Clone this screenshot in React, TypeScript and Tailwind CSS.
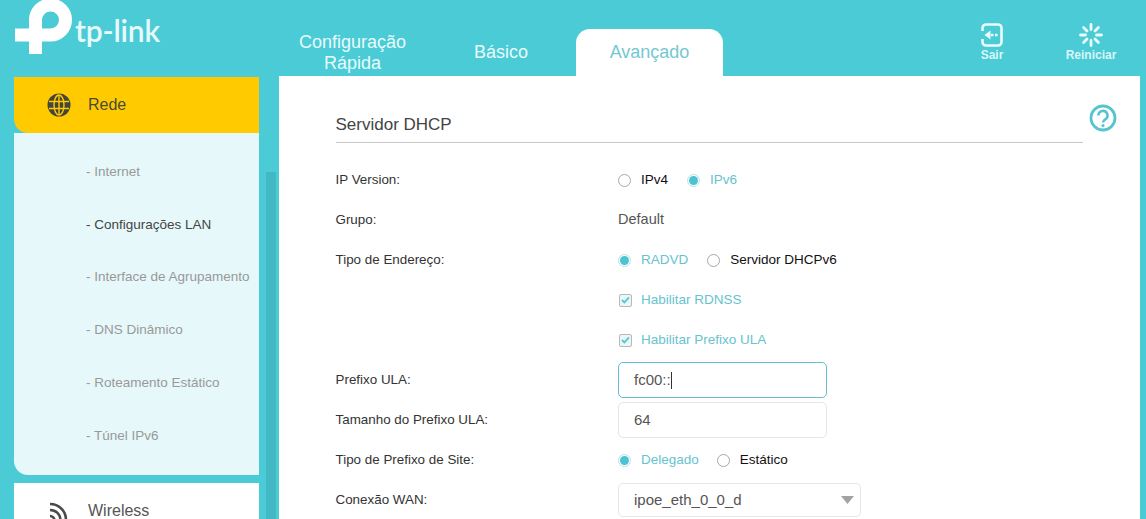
const Radio = ({ on, label, gap = "mr-[19px]" }: { on?: boolean; label: string; gap?: string }) => (
  <span className={`flex items-center ${gap}`}>
    <span className={`w-[13px] h-[13px] rounded-full border flex items-center justify-center ${on ? "border-[#b5e3e8]" : "border-[#a8a8a8]"}`}>
      {on && <span className="w-[9px] h-[9px] rounded-full bg-[#4cc3d0]" />}
    </span>
    <span className={`ml-[10px] text-[13.5px] ${on ? "text-[#67c3cf]" : "text-[#111]"}`}>{label}</span>
  </span>
);

const Check = ({ label }: { label: string }) => (
  <span className="flex items-center">
    <span className="w-[13px] h-[13px] ml-[1px] rounded-[2px] border border-[#b8b8b8] bg-[#e9f7f8] flex items-center justify-center">
      <svg width="9" height="8" viewBox="0 0 9 8"><path d="M1 4l2.4 2.4L8 1.4" fill="none" stroke="#5cc3cf" strokeWidth="1.8" /></svg>
    </span>
    <span className="ml-[9px] text-[13.5px] text-[#67c3cf]">{label}</span>
  </span>
);

const Row = ({ label, children }: { label?: string; children: React.ReactNode }) => (
  <div className="flex items-center h-10">
    <div className="w-[282.5px] -ml-[0.5px] text-[13.4px] text-[#333]">{label}</div>
    <div className="flex items-center">{children}</div>
  </div>
);

const subs = ["- Internet", "- Configurações LAN", "- Interface de Agrupamento", "- DNS Dinâmico", "- Roteamento Estático", "- Túnel IPv6"];

export default function App() {
  return (
    <div className="w-[1146px] h-[519px] overflow-hidden bg-[#4acbd6] font-['Liberation_Sans',Arial,sans-serif]">
      <header className="h-[76px] flex">
        <div className="w-[279px] flex items-start">
          <svg width="72" height="56" viewBox="0 0 72 56" className="ml-[1px] shrink-0">
            <path d="M34.5 54V20A15 15 0 1 1 49.5 35H14" fill="none" stroke="#fff" strokeWidth="13" />
          </svg>
          <span className="ml-[2px] mt-[8px] text-[30px] leading-[44px] tracking-[-0.2px] font-semibold text-[#e6fafb] font-['Lato',sans-serif]">tp-link</span>
        </div>
        <nav className="flex items-end">
          <div className="w-[147px] h-[47px] flex items-center justify-center text-center text-[18px] leading-[21px] text-[#e8fbfc]">Configuração<br />Rápida</div>
          <div className="w-[150px] h-[47px] flex items-center justify-center text-[18px] text-[#e8fbfc]">Básico</div>
          <div className="w-[147px] h-[47px] flex items-center justify-center text-[18px] text-[#74c8d2] bg-white rounded-t-[14px]">Avançado</div>
        </nav>
        <div className="flex-1 flex pt-[23px]">
          <div className="ml-[248px] w-[42px] flex flex-col items-center text-[12px] leading-[13px] font-bold text-[#d9f6f8]">
            <svg width="22" height="24" viewBox="0 0 22 24" fill="none" stroke="#eafcfd" strokeWidth="2.6">
              <path d="M1.500 8V5a3.500 3.500 0 0 1 3.500-3.500h12a3.500 3.500 0 0 1 3.500 3.500v14a3.500 3.500 0 0 1-3.500 3.500H5a3.500 3.500 0 0 1-3.500-3.500v-3" />
              <path d="M10 12h7" strokeWidth="2.4" strokeDasharray="2.500 1.500" />
              <path d="M3.500 12l6-4.500v9z" fill="#eafcfd" stroke="none" />
            </svg>
            <span className="mt-[2px]">Sair</span>
          </div>
          <div className="ml-[42px] w-[72px] flex flex-col items-center text-[12px] leading-[13px] font-bold text-[#d9f6f8]">
            <svg width="24" height="24" viewBox="0 0 24 24" fill="none" stroke="#eafcfd" strokeWidth="2.800" strokeLinecap="round">
              <path d="M12 1.500v5M12 17.500v5M1.500 12h5M17.500 12h5M4.600 4.600l3.400 3.400M16 16l3.400 3.400M4.600 19.400L8 16M16 8l3.400-3.400" />
            </svg>
            <span className="mt-[2px]">Reiniciar</span>
          </div>
        </div>
      </header>

      <div className="flex h-[443px]">
        <aside className="w-[279px] flex shrink-0">
          <div className="w-[245px] ml-[14px] pt-[1px] shrink-0">
            <div className="h-[56px] bg-[#ffcb00] rounded-bl-[14px] flex items-center text-[16px] text-[#4a4a3a]">
              <svg width="24" height="24" viewBox="0 0 24 24" className="ml-[33px]" fill="none">
                <circle cx="12" cy="12" r="11.5" fill="#45453a" />
                <g stroke="#ffcb00" strokeWidth="1.4">
                  <ellipse cx="12" cy="12" rx="5" ry="10" />
                  <path d="M2 8.5h20M2 15.5h20M12 2v20" />
                </g>
              </svg>
              <span className="ml-[17px]">Rede</span>
            </div>
            <div className="h-[342px] bg-[#e6f8f9] rounded-bl-[14px] pt-[12.5px] pl-[72px]">
              {subs.map((s, i) => (
                <div key={s} className={`h-[52.8px] flex items-center text-[13.5px] whitespace-nowrap ${i === 1 ? "text-[#444]" : "text-[#999]"}`}>{s}</div>
              ))}
            </div>
            <div className="mt-[8px] h-[60px] bg-white flex items-start pt-[16px] text-[16px] text-[#555]">
              <svg width="20" height="20" viewBox="0 0 20 20" className="ml-[35px] mt-[2px]" fill="none" stroke="#4a4a4a" strokeWidth="2.6">
                <path d="M1 3c9 0 16 7 16 16M1 9c6 0 10.500 4.500 10.500 10M1 15c2.500 0 4.500 2 4.500 4.500" />
              </svg>
              <span className="ml-[19px]">Wireless</span>
            </div>
          </div>
          <div className="ml-[7px] mt-[96px] w-[10px] bg-[#42b8c4]" />
        </aside>

        <main className="w-[861px] bg-white relative pl-[57px] pt-[28px]">
          <div className="w-[747px] h-[39px] border-b border-[#c8c8c8] text-[17px] leading-[41px] text-[#444]"><span className="-ml-[0.5px]">Servidor DHCP</span></div>
          <svg width="28" height="28" viewBox="0 0 28 28" className="absolute right-[23px] top-[28px]" fill="none" stroke="#56c4cf">
            <circle cx="14" cy="14" r="12" strokeWidth="2.8" />
            <path d="M9.500 11.500a4.500 4.500 0 1 1 6.800 3.800c-1.500 1-2.300 1.700-2.300 3.200" strokeWidth="2.6" />
            <circle cx="14" cy="21.500" r="1.600" fill="#56c4cf" stroke="none" />
          </svg>
          <div className="mt-[17px]">
            <Row label="IP Version:"><Radio label="IPv4" /><Radio on label="IPv6" /></Row>
            <Row label="Grupo:"><span className="text-[14.5px] text-[#555]">Default</span></Row>
            <Row label="Tipo de Endereço:"><Radio on label="RADVD" /><Radio label="Servidor DHCPv6" /></Row>
            <Row><Check label="Habilitar RDNSS" /></Row>
            <Row><Check label="Habilitar Prefixo ULA" /></Row>
            <Row label="Prefixo ULA:">
              <div className="w-[209px] h-[36px] rounded-[5px] border border-[#63bfc9] px-[15px] flex items-center text-[15px] text-[#555]">fc00::<span className="w-px h-[17px] bg-[#333]" /></div>
            </Row>
            <Row label="Tamanho do Prefixo ULA:">
              <div className="w-[209px] h-[36px] rounded-[5px] border border-[#e6e6e6] px-[15px] flex items-center text-[15px] text-[#555]">64</div>
            </Row>
            <Row label="Tipo de Prefixo de Site:"><Radio on label="Delegado" gap="mr-[18px]" /><Radio label="Estático" /></Row>
            <Row label="Conexão WAN:">
              <div className="w-[243px] h-[34px] rounded-[5px] border border-[#e6e6e6] pl-[15px] pr-[6px] flex items-center justify-between text-[15px] text-[#555]">
                ipoe_eth_0_0_d
                <svg width="13" height="8" viewBox="0 0 13 8"><path d="M0 0h13L6.500 8z" fill="#a3a3a3" /></svg>
              </div>
            </Row>
          </div>
        </main>
      </div>
    </div>
  );
}
